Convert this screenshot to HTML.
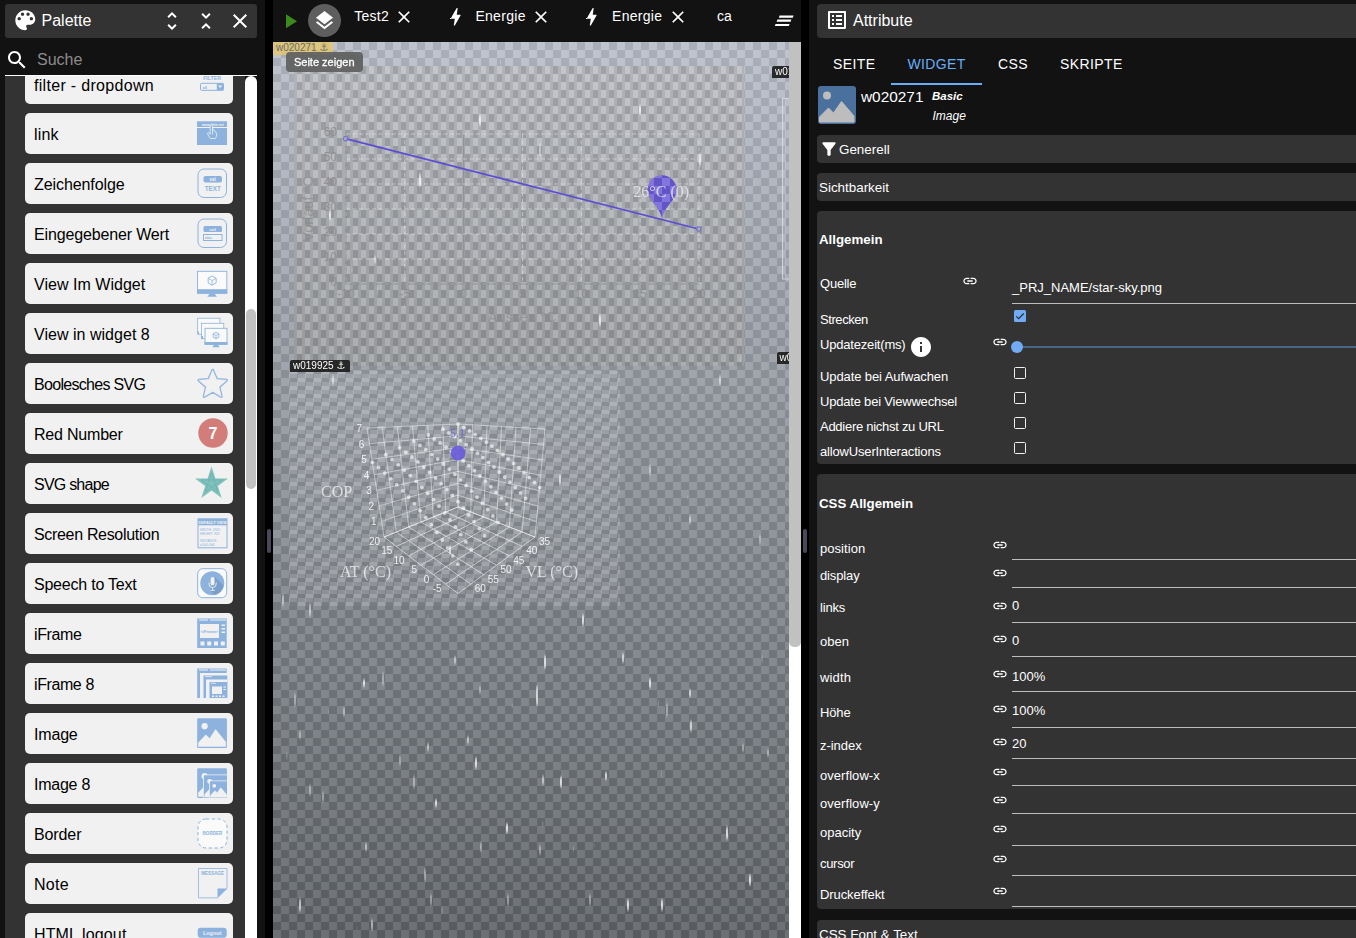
<!DOCTYPE html>
<html lang="de"><head><meta charset="utf-8"><title>vis editor</title>
<style>
*{box-sizing:border-box;margin:0;padding:0}
html,body{width:1356px;height:938px;overflow:hidden;background:#121212;font-family:"Liberation Sans","DejaVu Sans",sans-serif;color:#fff}
#root{position:relative;width:1356px;height:938px;overflow:hidden;background:#121212}
.abs{position:absolute}
svg{display:block}
/* left */
#lhead{left:5px;top:4px;width:252px;height:34px;background:#333;border-radius:3px}
#ptitle{left:41.5px;top:9px;font-size:16px;line-height:24px}
#search{left:37px;top:47.5px;font-size:16px;line-height:24px;color:#8c8c8c}
#sline{left:5px;top:74.9px;width:252px;height:1.2px;background:#fff}
#list{left:5px;top:76px;width:240px;height:862px;background:#333;overflow:hidden}
#ltrack{left:245px;top:76px;width:12px;height:862px;background:#fff;border-radius:6px 6px 0 0}
#lthumb{left:246px;top:309px;width:10px;height:180px;background:#c1c1c1;border-radius:5px}
.it{position:absolute;left:20.2px;width:207.5px;height:40.8px;background:#f1f1f1;border-radius:5px;color:#000;font-size:16px;line-height:40px;padding-left:8.8px;white-space:nowrap}
.it span{position:relative;top:2.7px}
.it svg{overflow:visible;position:absolute;right:5.8px;top:5.3px;width:30px;height:30px}
/* splitters */
.split{top:0;width:8px;height:938px;background:#000}
.grip{width:4px;height:24px;border-radius:2px;background:#484858}
/* center */
#canvas{left:273px;top:42px;width:516px;height:896px;overflow:hidden;background:#fff}
#ctrack{left:789px;top:42px;width:12px;height:896px;background:#fff}
#cthumb{left:789.3px;top:42px;width:11.4px;height:605px;background:#c1c1c1;border-radius:0 0 5px 5px}
.tab{font-size:14px;line-height:20px;top:6px;white-space:nowrap}
#chk{left:0;top:0;width:516px;height:896px;background:repeating-conic-gradient(#fff 0 25%,#ccc 0 50%) 0 0/16px 16px}
#w1{left:21px;top:24px;width:450px;height:300px;background:repeating-conic-gradient(rgba(239,222,191,.143) 0 25%,rgba(106,96,71,.143) 0 50%) 0 0/16px 16px}
#w2{left:16px;top:329px;width:331px;height:235px;background:repeating-conic-gradient(rgba(255,255,255,.17) 0 25%,rgba(150,150,150,.1) 0 50%) 1px 3px/16px 16px}
#sky{left:0;top:0;width:516px;height:896px;background:linear-gradient(to bottom,rgba(146,153,172,.58),rgba(72,80,91,.58) 50%,rgba(3,10,17,.58))}
.wl{font-size:10px;line-height:12px;padding-left:3px;white-space:nowrap;overflow:hidden}
.wd{background:rgba(30,30,30,.93);color:#fff;border-radius:2px 2px 0 0}
#tip{left:13px;top:10px;width:76.500px;height:20px;border-radius:4px;background:rgba(97,97,97,.94);font-size:11px;line-height:20px;-webkit-text-stroke:.3px #fff;text-align:center;white-space:nowrap}
/* right */
.blk{left:817px;width:545px;background:#333;border-radius:4px}
.lab{letter-spacing:-.2px;font-size:13px;line-height:16px;white-space:nowrap;left:820px}
.val{font-size:13px;line-height:16px;white-space:nowrap;left:1012px}
.sec{font-size:13.4px;line-height:16px;white-space:nowrap}
.secb{font-size:13.3px;line-height:16px;white-space:nowrap;font-weight:bold}
.ul{left:1012px;width:350px;height:1px;background:#bdbdbd}
.lk{width:16px;height:16px;fill:#fff}
.cb{left:1014px;width:12px;height:12px;border:1.5px solid #f0f0f0;border-radius:1.5px}
</style></head><body><div id="root">
<div id="lhead" class="abs"></div>
<svg class="abs" style="left:11.7px;top:7px;width:26.6px;height:26.6px;fill:#fff" viewBox="0 0 24 24"><path d="M12 3c-4.970 0-9 4.030-9 9s4.030 9 9 9c.830 0 1.500-.670 1.500-1.500 0-.390-.150-.740-.390-1.010-.230-.260-.380-.610-.380-.990 0-.830.670-1.500 1.500-1.500H16c2.760 0 5-2.240 5-5 0-4.420-4.030-8-9-8zm-5.500 9c-.830 0-1.500-.670-1.500-1.500S5.670 9 6.500 9 8 9.670 8 10.500 7.330 12 6.500 12zm3-4C8.670 8 8 7.330 8 6.500S8.670 5 9.500 5s1.500.670 1.500 1.500S10.330 8 9.500 8zm5 0c-.830 0-1.500-.670-1.500-1.500S13.670 5 14.500 5s1.500.670 1.500 1.500S15.330 8 14.500 8zm3 4c-.830 0-1.500-.670-1.500-1.500S16.670 9 17.500 9s1.500.670 1.500 1.500-.670 1.500-1.500 1.500z"/></svg><div class="abs" id="ptitle">Palette</div><svg class="abs" style="left:160px;top:9.3px;width:24px;height:24px;fill:#fff" viewBox="0 0 24 24"><path d="M12 5.830 15.170 9l1.410-1.410L12 3 7.410 7.590 8.830 9zm0 12.340L8.830 15l-1.410 1.410L12 21l4.590-4.590L15.170 15z"/></svg><svg class="abs" style="left:194px;top:9px;width:24px;height:24px;fill:#fff" viewBox="0 0 24 24"><path d="M7.410 18.590 8.830 20 12 16.830 15.170 20l1.410-1.410L12 14zm9.180-13.180L15.170 4 12 7.170 8.830 4 7.410 5.410 12 10z"/></svg><svg class="abs" style="left:228px;top:9.3px;width:24px;height:24px;fill:#fff" viewBox="0 0 24 24"><path d="M19 6.410 17.590 5 12 10.590 6.410 5 5 6.410 10.590 12 5 17.590 6.410 19 12 13.410 17.590 19 19 17.590 13.410 12z"/></svg>
<svg class="abs" style="left:5px;top:47.8px;width:24px;height:24px;fill:#fff" viewBox="0 0 24 24"><path d="M15.500 14h-.790l-.280-.270C15.410 12.590 16 11.110 16 9.500 16 5.910 13.090 3 9.500 3S3 5.910 3 9.500 5.910 16 9.500 16c1.610 0 3.090-.590 4.230-1.570l.270.280v.790l5 4.990L20.490 19zm-6 0C7.010 14 5 11.990 5 9.500S7.010 5 9.500 5 14 7.010 14 9.500 11.990 14 9.500 14"/></svg><div id="search" class="abs">Suche</div><div id="sline" class="abs"></div>
<div id="list" class="abs"><div class="it" style="top:-13.2px"><span style="letter-spacing:0.31px">filter - dropdown</span><svg viewBox="0 0 30 30"><text x="15.1" y="11.7" font-size="5.2" font-weight="bold" fill="#8cb2dd" text-anchor="middle">FILTER</text><rect x="3.5" y="15.3" width="23" height="7" rx="1" fill="#f1f1f1" stroke="#8cb2dd" stroke-width="1"/><rect x="19.8" y="15.3" width="6.7" height="7" fill="#8cb2dd"/><path d="M21.2 17.600h4l-2 2.400z" fill="#f1f1f1"/><text x="5.500" y="20.800" font-size="4" fill="#8cb2dd" font-weight="bold">all</text></svg></div><div class="it" style="top:36.8px"><span style="letter-spacing:0.195px">link</span><svg viewBox="0 0 30 30"><rect x="0" y="3.3" width="30" height="23.7" fill="#8cb2dd"/><rect x="0" y="9" width="30" height="1" fill="#f1f1f1"/><text x="15.8" y="7.6" font-size="3.6" fill="#f1f1f1" text-anchor="middle" font-weight="bold">www.link.net</text><path d="M15.6 9v7.5M15.6 12.5c1.2-.6 2.2-.4 2.4.8v1c1-.3 1.700.2 1.700 1.200 0 2-.4 3.600-1.400 5h-5c-.8-1.400-2-3-2.800-4.600-.4-1 .6-1.700 1.500-.8l1.200 1.300v-8.400c0-1.300 2.400-1.300 2.400 0z" fill="#8cb2dd" stroke="#f1f1f1" stroke-width=".8" stroke-linejoin="round"/></svg></div><div class="it" style="top:86.8px"><span style="letter-spacing:-0.077px">Zeichenfolge</span><svg viewBox="0 0 30 30"><rect x="1" y="1" width="28.5" height="28.5" rx="6" fill="none" stroke="#8cb2dd" stroke-width="1"/><rect x="6.5" y="8" width="18.500" height="6.500" rx="2" fill="#8cb2dd"/><text x="15.7" y="13" font-size="4.500" fill="#f1f1f1" text-anchor="middle" font-weight="bold">val</text><text x="15.7" y="23.3" font-size="6.3" fill="#8cb2dd" text-anchor="middle" font-weight="bold">TEXT</text></svg></div><div class="it" style="top:136.8px"><span style="letter-spacing:-0.146px">Eingegebener Wert</span><svg viewBox="0 0 30 30"><rect x="1" y="1" width="28.5" height="28.5" rx="6" fill="none" stroke="#8cb2dd" stroke-width="1"/><rect x="6.5" y="8" width="18.500" height="6" rx="1.500" fill="#8cb2dd"/><text x="15.7" y="12.700" font-size="4.300" fill="#f1f1f1" text-anchor="middle" font-weight="bold">ctrl</text><rect x="6.500" y="16.500" width="18.500" height="6" fill="#f1f1f1" stroke="#8cb2dd" stroke-width="1"/><text x="8" y="21.300" font-size="4" fill="#8cb2dd" font-weight="bold">abc</text></svg></div><div class="it" style="top:186.8px"><span style="letter-spacing:0.031px">View Im Widget</span><svg viewBox="0 0 30 30"><rect x="0.5" y="3.3" width="29.3" height="21.9" fill="#fafafa" stroke="#8cb2dd" stroke-width=".9"/><rect x="0.04999999999999999" y="21.2" width="30.2" height="4.45" fill="#8cb2dd"/><path d="M12.95 25.2h4.39l2.64 3.5h-9.67z" fill="#8cb2dd"/><path d="M15.15 7.95l3.98 2.30v4.60l-3.98 2.30l-3.98 -2.30v-4.60z" fill="none" stroke="#8cb2dd" stroke-width=".9" stroke-linejoin="round"/><path d="M15.15 17.15V12.55l3.98 -2.30M15.15 12.55l-3.98 -2.30" stroke="#8cb2dd" stroke-width=".8" fill="none"/></svg></div><div class="it" style="top:236.8px"><span style="letter-spacing:0.029px">View in widget 8</span><svg viewBox="0 0 30 30"><rect x="0.7" y="0.2" width="22.2" height="16" fill="#fafafa" stroke="#8cb2dd" stroke-width=".8"/><rect x="0.7" y="13.5" width="1.300" height="2.700" fill="#8cb2dd"/><rect x="4.400" y="5.300" width="22.400" height="15.400" fill="#fafafa" stroke="#8cb2dd" stroke-width=".8"/><rect x="4.400" y="18" width="1.600" height="2.700" fill="#8cb2dd"/><rect x="8" y="10.3" width="22" height="16" fill="#fafafa" stroke="#8cb2dd" stroke-width=".9"/><rect x="7.55" y="24.0" width="22.9" height="2.75" fill="#8cb2dd"/><path d="M17.35 26.3h3.30l1.98 3h-7.26z" fill="#8cb2dd"/><path d="M19.0 14.15l2.86 1.65v3.30l-2.86 1.65l-2.86 -1.65v-3.30z" fill="none" stroke="#8cb2dd" stroke-width=".9" stroke-linejoin="round"/><path d="M19.0 20.75V17.45l2.86 -1.65M19.0 17.45l-2.86 -1.65" stroke="#8cb2dd" stroke-width=".8" fill="none"/></svg></div><div class="it" style="top:286.8px"><span style="letter-spacing:-0.69px">Boolesches SVG</span><svg viewBox="0 0 30 30"><path d="M15.700 2.200l3.900 9.200 10 .850-7.600 6.550 2.300 9.800-8.600-5.200-8.600 5.200 2.300-9.800-7.600-6.550 10-.850z" fill="#8cb2dd" stroke="#8cb2dd" stroke-width="2.900" stroke-linejoin="round"/><path d="M15.700 2.200l3.900 9.200 10 .850-7.600 6.550 2.300 9.800-8.600-5.200-8.600 5.200 2.300-9.800-7.600-6.550 10-.850z" fill="#f1f1f1" stroke="#f1f1f1" stroke-width=".5" stroke-linejoin="round"/></svg></div><div class="it" style="top:336.8px"><span style="letter-spacing:-0.2px">Red Number</span><svg viewBox="0 0 30 30"><circle cx="16" cy="15" r="14.700" fill="#d27d79"/><text x="16" y="20.500" font-size="16" fill="#fff" text-anchor="middle" font-weight="bold">7</text></svg></div><div class="it" style="top:386.8px"><span style="letter-spacing:-0.77px">SVG shape</span><svg viewBox="0 0 30 30"><path d="M14.500 -1.500l3.900 12h12.600l-10.200 7.400 3.900 12-10.200-7.400-10.200 7.400 3.900-12-10.200-7.400h12.600z" fill="#7fc1bb"/><path d="M14.500 4.500l6.300 19.500-16.500-12h20.400l-16.500 12z" fill="none" stroke="#6cb0ae" stroke-width=".8"/></svg></div><div class="it" style="top:436.8px"><span style="letter-spacing:-0.321px">Screen Resolution</span><svg viewBox="0 0 30 30"><rect x="1" y="0.800" width="29" height="29" fill="#f1f1f1" stroke="#8cb2dd" stroke-width="1"/><rect x="1" y="0.800" width="29" height="6.500" fill="#8cb2dd"/><text x="15.500" y="6" font-size="3.800" fill="#f1f1f1" text-anchor="middle" font-weight="bold">DEFAULT VIEW</text><text x="3" y="12.800" font-size="3.300" fill="#8cb2dd">WIDTH: 1920</text><text x="3" y="17" font-size="3.300" fill="#8cb2dd">HEIGHT: 919</text><text x="3" y="23.800" font-size="3.300" fill="#8cb2dd">INSTANCE:</text><text x="3" y="27.800" font-size="3.300" fill="#8cb2dd">a1b2c3d4</text></svg></div><div class="it" style="top:486.8px"><span style="letter-spacing:-0.219px">Speech to Text</span><svg viewBox="0 0 30 30"><rect x="0.7" y="0.7" width="29" height="29" rx="5" fill="#fafafa" stroke="#8cb2dd" stroke-width="1"/><circle cx="15.300" cy="15.300" r="12" fill="#8cb2dd"/><path d="M18 9l8.300 8.300a11.500 11.500 0 0 1-8.800 9.600l-4.700-4.700z" fill="#7a9fc9"/><rect x="13.700" y="9" width="3.800" height="8.500" rx="1.900" fill="#f1f1f1"/><path d="M12 14.500v1.500a3.600 3.600 0 0 0 7.200 0v-1.500M15.600 19.600v2.400M13.300 22.300h4.600" stroke="#f1f1f1" stroke-width=".9" fill="none"/></svg></div><div class="it" style="top:536.8px"><span style="letter-spacing:-0.398px">iFrame</span><svg viewBox="0 0 30 30"><rect x="0.2" y="0.500" width="29.500" height="29.500" fill="#8cb2dd"/><rect x="2" y="1.500" width="9" height="1" fill="#f1f1f1"/><rect x="13" y="1.500" width="16" height="1" fill="#f1f1f1"/><rect x="3" y="6" width="19" height="14" fill="#f1f1f1"/><text x="12.500" y="14.800" font-size="4" fill="#8cb2dd" text-anchor="middle" font-weight="bold">&lt;iFrame&gt;</text><rect x="24.500" y="6.500" width="3.500" height="1.500" fill="#f1f1f1"/><rect x="24.500" y="10" width="3.500" height="1.500" fill="#f1f1f1"/><rect x="24.500" y="13.500" width="3.500" height="1.500" fill="#f1f1f1"/><rect x="3.500" y="23.500" width="4" height="4" fill="#f1f1f1"/><rect x="10.200" y="23.500" width="4" height="4" fill="#f1f1f1"/><rect x="17" y="23.500" width="4" height="4" fill="#f1f1f1"/><rect x="23.800" y="23.500" width="4" height="4" fill="#f1f1f1"/></svg></div><div class="it" style="top:586.8px"><span style="letter-spacing:-0.405px">iFrame 8</span><svg viewBox="0 0 30 30"><rect x="0.2" y="0.500" width="29.500" height="29.500" fill="#8cb2dd"/><rect x="2" y="1.500" width="9" height="1" fill="#f1f1f1"/><rect x="13" y="1.500" width="16" height="1" fill="#f1f1f1"/><rect x="3" y="5" width="27.300" height="25" fill="#f1f1f1"/><rect x="6.500" y="7.500" width="23.800" height="22.500" fill="#8cb2dd"/><rect x="8" y="8.300" width="7" height=".8" fill="#f1f1f1"/><rect x="9" y="11.500" width="21.300" height="18.500" fill="#f1f1f1"/><rect x="12.500" y="14" width="17.800" height="16" fill="#8cb2dd"/><rect x="14" y="14.800" width="5" height=".8" fill="#f1f1f1"/><rect x="15" y="18.500" width="10" height="7.500" fill="#f1f1f1"/><rect x="26.500" y="18.500" width="2.500" height="1" fill="#f1f1f1"/><rect x="26.500" y="21" width="2.500" height="1" fill="#f1f1f1"/><rect x="15" y="27.500" width="2" height="1.500" fill="#f1f1f1"/><rect x="18.500" y="27.500" width="2" height="1.500" fill="#f1f1f1"/><rect x="22" y="27.500" width="2" height="1.500" fill="#f1f1f1"/><rect x="25.500" y="27.500" width="2" height="1.500" fill="#f1f1f1"/></svg></div><div class="it" style="top:636.8px"><span style="letter-spacing:-0.174px">Image</span><svg viewBox="0 0 30 30"><rect x="0.2" y="0.2" width="29.7" height="29.7" rx="1.2" fill="#8cb2dd"/><circle cx="7.62" cy="8.22" r="3.12" fill="#f1f1f1"/><path d="M1.39 28.41v-3.56l7.42 -8.02 3.86 3.56 5.94 -8.91 10.10 12.47v4.46z" fill="#f1f1f1" stroke="#f1f1f1" stroke-width=".5" stroke-linejoin="round"/></svg></div><div class="it" style="top:686.8px"><span style="letter-spacing:-0.245px">Image 8</span><svg viewBox="0 0 30 30" style="overflow:hidden"><rect x="0.2" y="0.2" width="29.7" height="29.7" rx="1.2" fill="#8cb2dd"/><circle cx="7.62" cy="8.22" r="3.12" fill="#f1f1f1"/><path d="M1.39 28.41v-3.56l7.42 -8.02 3.86 3.56 5.94 -8.91 10.10 12.47v4.46z" fill="#f1f1f1" stroke="#f1f1f1" stroke-width=".5" stroke-linejoin="round"/><rect x="6" y="6.500" width="24.500" height="23.700" rx="1.200" fill="#f1f1f1"/><rect x="6.8" y="7.3" width="23.7" height="22.9" rx="1.2" fill="#8cb2dd"/><circle cx="12.72" cy="13.48" r="2.49" fill="#f1f1f1"/><path d="M7.75 29.05v-2.75l5.92 -6.18 3.08 2.75 4.74 -6.87 8.06 9.62v3.43z" fill="#f1f1f1" stroke="#f1f1f1" stroke-width=".5" stroke-linejoin="round"/><rect x="12" y="12.500" width="18.500" height="17.700" rx="1.200" fill="#f1f1f1"/><rect x="12.8" y="13.3" width="17.7" height="16.9" rx="1.2" fill="#8cb2dd"/><circle cx="17.23" cy="17.86" r="1.86" fill="#f1f1f1"/><path d="M13.51 29.35v-2.03l4.42 -4.56 2.30 2.03 3.54 -5.07 6.02 7.10v2.53z" fill="#f1f1f1" stroke="#f1f1f1" stroke-width=".5" stroke-linejoin="round"/></svg></div><div class="it" style="top:736.8px"><span style="letter-spacing:-0.104px">Border</span><svg viewBox="0 0 30 30"><rect x="1" y="1" width="29" height="29" rx="8" fill="#fafafa" stroke="#8cb2dd" stroke-width="1" stroke-dasharray="3.300 2.500"/><text x="15.500" y="17.300" font-size="4.600" fill="#8cb2dd" text-anchor="middle" font-weight="bold">BORDER</text></svg></div><div class="it" style="top:786.8px"><span style="letter-spacing:0.249px">Note</span><svg viewBox="0 0 30 30"><path d="M1.500 .500h28.500v20l-9.500 9.300h-19z" fill="#f1f1f1" stroke="#8cb2dd" stroke-width=".8"/><path d="M30 20.500l-9.500 9.300v-9.300z" fill="#8cb2dd"/><text x="15.700" y="7" font-size="4.600" fill="#8cb2dd" text-anchor="middle" font-weight="bold">MESSAGE</text></svg></div><div class="it" style="top:836.8px"><span style="letter-spacing:0.136px">HTML logout</span><svg viewBox="0 0 30 30"><rect x="0.7" y="9.800" width="29" height="10" rx="3" fill="#8cb2dd"/><text x="15.200" y="17.100" font-size="5.500" fill="#f1f1f1" text-anchor="middle" font-weight="bold">Logout</text></svg></div></div><div id="ltrack" class="abs"></div><div id="lthumb" class="abs"></div>
<div class="abs split" style="left:265px"></div><div class="abs grip" style="left:267px;top:529px"></div>
<div class="abs split" style="left:801px"></div><div class="abs grip" style="left:803.2px;top:529px"></div>
<svg class="abs" style="left:286px;top:13.5px;width:12px;height:15px" viewBox="0 0 12 15"><path d="M0 0.300L11 7.300 0 14.300z" fill="#3a8a1e"/></svg><div class="abs" style="left:308px;top:4px;width:33px;height:33px;border-radius:50%;background:#5e5e5e"></div><svg class="abs" style="left:312.7px;top:9px;width:23px;height:23px;fill:#fff" viewBox="0 0 24 24"><path d="m11.990 18.540-7.370-5.730L3 14.070l9 7 9-7-1.630-1.270zM12 16l7.360-5.730L21 9l-9-7-9 7 1.630 1.270z"/></svg><div class="abs tab" style="left:354.3px;letter-spacing:.25px">Test2</div><svg class="abs" style="left:394.2px;top:7px;width:20px;height:20px;fill:#fff" viewBox="0 0 24 24"><path d="M19 6.410 17.590 5 12 10.590 6.410 5 5 6.410 10.590 12 5 17.590 6.410 19 12 13.410 17.590 19 19 17.590 13.410 12z"/></svg><svg class="abs" style="left:443.5px;top:5px;width:23.5px;height:23.5px;fill:#fff" viewBox="0 0 24 24"><path d="M11 21h-1l1-7H7.500c-.580 0-.570-.320-.380-.660.190-.340.050-.080.070-.120C8.480 10.940 10.420 7.540 13 3h1l-1 7h3.500c.490 0 .560.330.470.510l-.070.150C12.960 17.550 11 21 11 21z"/></svg><div class="abs tab" style="left:475.4px;letter-spacing:.3px">Energie</div><svg class="abs" style="left:530.7px;top:7px;width:20px;height:20px;fill:#fff" viewBox="0 0 24 24"><path d="M19 6.410 17.590 5 12 10.590 6.410 5 5 6.410 10.590 12 5 17.590 6.410 19 12 13.410 17.590 19 19 17.590 13.410 12z"/></svg><svg class="abs" style="left:580.4px;top:5px;width:23.5px;height:23.5px;fill:#fff" viewBox="0 0 24 24"><path d="M11 21h-1l1-7H7.500c-.580 0-.570-.320-.380-.660.190-.340.050-.080.070-.120C8.480 10.940 10.420 7.540 13 3h1l-1 7h3.500c.490 0 .560.330.470.510l-.070.150C12.960 17.550 11 21 11 21z"/></svg><div class="abs tab" style="left:612px;letter-spacing:.3px">Energie</div><svg class="abs" style="left:668.2px;top:7px;width:20px;height:20px;fill:#fff" viewBox="0 0 24 24"><path d="M19 6.410 17.590 5 12 10.590 6.410 5 5 6.410 10.590 12 5 17.590 6.410 19 12 13.410 17.590 19 19 17.590 13.410 12z"/></svg><div class="abs tab" style="left:717px">ca</div><svg class="abs" style="left:774px;top:15px;width:21px;height:12px" viewBox="0 0 21 12"><path d="M5.600 .600h14l-.800 2.100h-14zM3.400 4.600h14l-.800 2.100h-14zM1.600 8.900h14l-.800 2.200h-14z" fill="#fff"/></svg>
<div id="canvas" class="abs"><div class="abs" id="chk"></div><div class="abs" id="sky"></div><div class="abs" id="w1"></div><div class="abs" id="w2"></div><svg class="abs" style="left:0;top:0;width:516px;height:896px" viewBox="0 0 516 896" font-family="Liberation Sans, sans-serif"><path d="M73.0 92V242" stroke="#ececec" stroke-width="1" stroke-dasharray="4 2.500" opacity=".5"/><path d="M131.8 92V242" stroke="#ececec" stroke-width="1" stroke-dasharray="4 2.500" opacity=".5"/><path d="M190.7 92V242" stroke="#8c8c8c" stroke-width="1.3" opacity=".75"/><path d="M249.5 92V242" stroke="#ececec" stroke-width="1" stroke-dasharray="4 2.500" opacity=".5"/><path d="M308.3 92V242" stroke="#ececec" stroke-width="1" stroke-dasharray="4 2.500" opacity=".5"/><path d="M367.1 92V242" stroke="#ececec" stroke-width="1" stroke-dasharray="4 2.500" opacity=".5"/><path d="M426.0 92V242" stroke="#ececec" stroke-width="1" stroke-dasharray="4 2.500" opacity=".5"/><path d="M73.0 92H426.0" stroke="#ececec" stroke-width="1" stroke-dasharray="4 2.500" opacity=".5"/><path d="M73.0 117H426.0" stroke="#ececec" stroke-width="1" stroke-dasharray="4 2.500" opacity=".5"/><path d="M73.0 142H426.0" stroke="#ececec" stroke-width="1" stroke-dasharray="4 2.500" opacity=".5"/><path d="M73.0 167H426.0" stroke="#ececec" stroke-width="1" stroke-dasharray="4 2.500" opacity=".5"/><path d="M73.0 192H426.0" stroke="#ececec" stroke-width="1" stroke-dasharray="4 2.500" opacity=".5"/><path d="M73.0 217H426.0" stroke="#ececec" stroke-width="1" stroke-dasharray="4 2.500" opacity=".5"/><path d="M73.0 242H426.0" stroke="#ececec" stroke-width="1" stroke-dasharray="4 2.500" opacity=".5"/><path d="M73.0 92V242H426.0" stroke="#8c8c8c" stroke-width="1.3" fill="none" opacity=".7"/><text x="64" y="94" font-size="12" fill="#8b8b8b" opacity=".8" text-anchor="end">60</text><text x="64" y="119" font-size="12" fill="#8b8b8b" opacity=".8" text-anchor="end">50</text><text x="64" y="144" font-size="12" fill="#8b8b8b" opacity=".8" text-anchor="end">40</text><text x="64" y="169" font-size="12" fill="#8b8b8b" opacity=".8" text-anchor="end">30</text><text x="64" y="194" font-size="12" fill="#8b8b8b" opacity=".8" text-anchor="end">20</text><text x="64" y="219" font-size="12" fill="#8b8b8b" opacity=".8" text-anchor="end">10</text><text x="64" y="244" font-size="12" fill="#8b8b8b" opacity=".8" text-anchor="end">0</text><text x="73.0" y="256" font-size="12" fill="#8b8b8b" opacity=".8" text-anchor="middle">-10</text><text x="131.8" y="256" font-size="12" fill="#8b8b8b" opacity=".8" text-anchor="middle">-5</text><text x="190.7" y="256" font-size="12" fill="#8b8b8b" opacity=".8" text-anchor="middle">0</text><text x="249.5" y="256" font-size="12" fill="#8b8b8b" opacity=".8" text-anchor="middle">5</text><text x="308.3" y="256" font-size="12" fill="#8b8b8b" opacity=".8" text-anchor="middle">10</text><text x="367.1" y="256" font-size="12" fill="#8b8b8b" opacity=".8" text-anchor="middle">15</text><text x="426.0" y="256" font-size="12" fill="#8b8b8b" opacity=".8" text-anchor="middle">20</text><text x="249" y="280" font-size="14.500" fill="#8b8b8b" opacity=".7" text-anchor="middle">Aussen °C</text><text transform="translate(39.5 167) rotate(-90)" font-size="14.500" fill="#8b8b8b" opacity=".7" text-anchor="middle">Vorlauf °C</text><path d="M516 56.5H509.6V237H516" stroke="#e4e4e8" stroke-width="1.200" fill="none" opacity=".75"/><path d="M512.2 58V235.5" stroke="#e4e4e8" stroke-width=".8" fill="none" opacity=".5"/></svg><svg class="abs" style="left:0;top:0;width:516px;height:896px" viewBox="0 0 516 896" font-family="Liberation Sans, sans-serif"><defs><filter id="bl" x="-200%" y="-50%" width="500%" height="200%"><feGaussianBlur stdDeviation=".55 .9"/></filter></defs><g filter="url(#bl)" opacity=".8"><ellipse cx="10" cy="558" rx="1" ry="6" fill="#fff" opacity="0.65"/><ellipse cx="22" cy="658" rx="1" ry="7" fill="#fff" opacity="0.5"/><ellipse cx="27" cy="693" rx="1" ry="4" fill="#fff" opacity="0.5"/><ellipse cx="37" cy="748" rx="1" ry="6" fill="#fff" opacity="0.5"/><ellipse cx="50" cy="755" rx="1" ry="5" fill="#fff" opacity="0.5"/><ellipse cx="91" cy="641" rx="1" ry="4" fill="#fff" opacity="0.9500000000000001"/><ellipse cx="110" cy="637" rx="1" ry="7" fill="#fff" opacity="0.5"/><ellipse cx="127" cy="718" rx="1" ry="5" fill="#fff" opacity="0.5"/><ellipse cx="141" cy="740" rx="1" ry="7" fill="#fff" opacity="0.5"/><ellipse cx="155" cy="705" rx="1" ry="4" fill="#fff" opacity="0.65"/><ellipse cx="163" cy="761" rx="1" ry="4" fill="#fff" opacity="0.9500000000000001"/><ellipse cx="182" cy="618" rx="1" ry="4" fill="#fff" opacity="0.65"/><ellipse cx="195" cy="698" rx="1" ry="4" fill="#fff" opacity="0.65"/><ellipse cx="203" cy="721" rx="1" ry="6" fill="#fff" opacity="0.9500000000000001"/><ellipse cx="208" cy="805" rx="1" ry="5" fill="#fff" opacity="0.5"/><ellipse cx="99" cy="883" rx="1" ry="6" fill="#fff" opacity="0.65"/><ellipse cx="93" cy="805" rx="1" ry="4" fill="#fff" opacity="0.65"/><ellipse cx="158" cy="858" rx="1" ry="6" fill="#fff" opacity="0.5"/><ellipse cx="207" cy="648" rx="1" ry="4" fill="#fff" opacity="0.5"/><ellipse cx="234" cy="786" rx="1" ry="5" fill="#fff" opacity="0.9500000000000001"/><ellipse cx="264" cy="650" rx="1" ry="7" fill="#fff" opacity="0.8"/><ellipse cx="272" cy="620" rx="1" ry="7" fill="#fff" opacity="0.9500000000000001"/><ellipse cx="264" cy="658" rx="1" ry="6" fill="#fff" opacity="0.8"/><ellipse cx="270" cy="738" rx="1" ry="5" fill="#fff" opacity="0.65"/><ellipse cx="267" cy="808" rx="1" ry="5" fill="#fff" opacity="0.5"/><ellipse cx="288" cy="740" rx="1" ry="6" fill="#fff" opacity="0.9500000000000001"/><ellipse cx="310" cy="578" rx="1" ry="6" fill="#fff" opacity="0.9500000000000001"/><ellipse cx="317" cy="858" rx="1" ry="6" fill="#fff" opacity="0.5"/><ellipse cx="333" cy="734" rx="1" ry="4" fill="#fff" opacity="0.9500000000000001"/><ellipse cx="350" cy="616" rx="1" ry="5" fill="#fff" opacity="0.8"/><ellipse cx="377" cy="641" rx="1" ry="5" fill="#fff" opacity="0.9500000000000001"/><ellipse cx="394" cy="668" rx="1" ry="7" fill="#fff" opacity="0.5"/><ellipse cx="417" cy="651" rx="1" ry="4" fill="#fff" opacity="0.8"/><ellipse cx="418" cy="684" rx="1" ry="6" fill="#fff" opacity="0.8"/><ellipse cx="454" cy="791" rx="1" ry="7" fill="#fff" opacity="0.9500000000000001"/><ellipse cx="470" cy="706" rx="1" ry="4" fill="#fff" opacity="0.5"/><ellipse cx="477" cy="838" rx="1" ry="6" fill="#fff" opacity="0.9500000000000001"/><ellipse cx="495" cy="711" rx="1" ry="4" fill="#fff" opacity="0.5"/><ellipse cx="355" cy="863" rx="1" ry="6" fill="#fff" opacity="0.9500000000000001"/><ellipse cx="389" cy="863" rx="1" ry="6" fill="#fff" opacity="0.9500000000000001"/><ellipse cx="235" cy="858" rx="1" ry="6" fill="#fff" opacity="0.5"/><ellipse cx="27" cy="863" rx="1" ry="7" fill="#fff" opacity="0.8"/><ellipse cx="71" cy="670" rx="1" ry="5" fill="#fff" opacity="0.5"/><ellipse cx="152" cy="833" rx="1" ry="7" fill="#fff" opacity="0.5"/><ellipse cx="177" cy="508" rx="1" ry="5" fill="#fff" opacity="0.8"/><ellipse cx="60" cy="338" rx="1" ry="5" fill="#fff" opacity="0.65"/><ellipse cx="147" cy="138" rx="1" ry="7" fill="#fff" opacity="0.9500000000000001"/><ellipse cx="267" cy="108" rx="1" ry="7" fill="#fff" opacity="0.5"/><ellipse cx="367" cy="68" rx="1" ry="5" fill="#fff" opacity="0.9500000000000001"/><ellipse cx="427" cy="118" rx="1" ry="7" fill="#fff" opacity="0.8"/><ellipse cx="57" cy="173" rx="1" ry="5" fill="#fff" opacity="0.9500000000000001"/><ellipse cx="207" cy="78" rx="1" ry="6" fill="#fff" opacity="0.9500000000000001"/><ellipse cx="327" cy="278" rx="1" ry="6" fill="#fff" opacity="0.9500000000000001"/><ellipse cx="447" cy="338" rx="1" ry="5" fill="#fff" opacity="0.65"/><ellipse cx="417" cy="478" rx="1" ry="4" fill="#fff" opacity="0.65"/><ellipse cx="377" cy="428" rx="1" ry="5" fill="#fff" opacity="0.65"/><ellipse cx="487" cy="498" rx="1" ry="5" fill="#fff" opacity="0.5"/><ellipse cx="37" cy="568" rx="1" ry="7" fill="#fff" opacity="0.65"/><ellipse cx="287" cy="438" rx="1" ry="6" fill="#fff" opacity="0.8"/><ellipse cx="102" cy="218" rx="1" ry="4" fill="#fff" opacity="0.65"/><ellipse cx="216.7" cy="331.9" rx=".6" ry="4" fill="#fff" opacity="0.2"/><ellipse cx="489.1" cy="617.2" rx=".6" ry="4" fill="#fff" opacity="0.3"/><ellipse cx="337.0" cy="660.9" rx=".6" ry="3" fill="#fff" opacity="0.3"/><ellipse cx="409.9" cy="352.4" rx=".6" ry="3" fill="#fff" opacity="0.2"/><ellipse cx="55.8" cy="567.2" rx=".6" ry="2" fill="#fff" opacity="0.15"/><ellipse cx="37.3" cy="189.4" rx=".6" ry="2" fill="#fff" opacity="0.15"/><ellipse cx="176.4" cy="50.7" rx=".6" ry="2" fill="#fff" opacity="0.3"/><ellipse cx="80.1" cy="94.1" rx=".6" ry="3" fill="#fff" opacity="0.3"/><ellipse cx="16.0" cy="780.4" rx=".6" ry="4" fill="#fff" opacity="0.2"/><ellipse cx="78.8" cy="228.0" rx=".6" ry="3" fill="#fff" opacity="0.3"/><ellipse cx="188.7" cy="113.1" rx=".6" ry="3" fill="#fff" opacity="0.2"/><ellipse cx="248.0" cy="280.9" rx=".6" ry="2" fill="#fff" opacity="0.15"/><ellipse cx="385.3" cy="661.4" rx=".6" ry="3" fill="#fff" opacity="0.3"/><ellipse cx="85.3" cy="24.5" rx=".6" ry="4" fill="#fff" opacity="0.2"/><ellipse cx="77.8" cy="486.3" rx=".6" ry="2" fill="#fff" opacity="0.3"/><ellipse cx="155.0" cy="574.9" rx=".6" ry="2" fill="#fff" opacity="0.3"/><ellipse cx="434.2" cy="464.3" rx=".6" ry="2" fill="#fff" opacity="0.2"/><ellipse cx="396.7" cy="476.9" rx=".6" ry="4" fill="#fff" opacity="0.2"/><ellipse cx="327.6" cy="548.5" rx=".6" ry="2" fill="#fff" opacity="0.15"/><ellipse cx="420.3" cy="661.0" rx=".6" ry="2" fill="#fff" opacity="0.15"/><ellipse cx="267.0" cy="319.7" rx=".6" ry="2" fill="#fff" opacity="0.15"/><ellipse cx="406.0" cy="423.3" rx=".6" ry="2" fill="#fff" opacity="0.3"/><ellipse cx="311.6" cy="309.7" rx=".6" ry="4" fill="#fff" opacity="0.2"/><ellipse cx="490.1" cy="327.8" rx=".6" ry="2" fill="#fff" opacity="0.15"/><ellipse cx="118.7" cy="178.7" rx=".6" ry="2" fill="#fff" opacity="0.2"/><ellipse cx="321.3" cy="803.5" rx=".6" ry="2" fill="#fff" opacity="0.2"/><ellipse cx="466.7" cy="309.5" rx=".6" ry="4" fill="#fff" opacity="0.15"/><ellipse cx="428.7" cy="110.5" rx=".6" ry="3" fill="#fff" opacity="0.3"/><ellipse cx="385.6" cy="428.5" rx=".6" ry="2" fill="#fff" opacity="0.2"/><ellipse cx="405.5" cy="299.3" rx=".6" ry="4" fill="#fff" opacity="0.2"/><ellipse cx="239.2" cy="664.1" rx=".6" ry="2" fill="#fff" opacity="0.3"/><ellipse cx="84.0" cy="885.9" rx=".6" ry="2" fill="#fff" opacity="0.15"/><ellipse cx="304.3" cy="417.2" rx=".6" ry="4" fill="#fff" opacity="0.15"/><ellipse cx="314.9" cy="533.1" rx=".6" ry="3" fill="#fff" opacity="0.3"/><ellipse cx="481.1" cy="142.5" rx=".6" ry="4" fill="#fff" opacity="0.15"/><ellipse cx="13.9" cy="713.8" rx=".6" ry="4" fill="#fff" opacity="0.3"/><ellipse cx="55.4" cy="669.6" rx=".6" ry="2" fill="#fff" opacity="0.2"/><ellipse cx="506.1" cy="177.0" rx=".6" ry="2" fill="#fff" opacity="0.15"/><ellipse cx="131.4" cy="264.2" rx=".6" ry="2" fill="#fff" opacity="0.3"/><ellipse cx="169.3" cy="487.4" rx=".6" ry="2" fill="#fff" opacity="0.15"/><ellipse cx="467.1" cy="318.2" rx=".6" ry="3" fill="#fff" opacity="0.3"/><ellipse cx="300.5" cy="807.0" rx=".6" ry="3" fill="#fff" opacity="0.3"/><ellipse cx="69.7" cy="138.8" rx=".6" ry="4" fill="#fff" opacity="0.15"/><ellipse cx="448.1" cy="693.5" rx=".6" ry="4" fill="#fff" opacity="0.15"/><ellipse cx="398.8" cy="137.0" rx=".6" ry="2" fill="#fff" opacity="0.2"/><ellipse cx="318.7" cy="110.9" rx=".6" ry="2" fill="#fff" opacity="0.2"/><ellipse cx="351.0" cy="475.3" rx=".6" ry="3" fill="#fff" opacity="0.15"/><ellipse cx="453.4" cy="54.5" rx=".6" ry="2" fill="#fff" opacity="0.2"/><ellipse cx="24.5" cy="90.8" rx=".6" ry="3" fill="#fff" opacity="0.3"/><ellipse cx="17.2" cy="797.9" rx=".6" ry="2" fill="#fff" opacity="0.2"/><ellipse cx="169.1" cy="868.3" rx=".6" ry="4" fill="#fff" opacity="0.3"/><ellipse cx="104.7" cy="250.1" rx=".6" ry="4" fill="#fff" opacity="0.3"/><ellipse cx="414.8" cy="454.9" rx=".6" ry="2" fill="#fff" opacity="0.3"/><ellipse cx="269.8" cy="781.9" rx=".6" ry="3" fill="#fff" opacity="0.3"/><ellipse cx="458.3" cy="183.9" rx=".6" ry="3" fill="#fff" opacity="0.15"/><ellipse cx="215.5" cy="352.4" rx=".6" ry="3" fill="#fff" opacity="0.15"/><ellipse cx="345.3" cy="384.4" rx=".6" ry="2" fill="#fff" opacity="0.3"/><ellipse cx="157.4" cy="112.6" rx=".6" ry="2" fill="#fff" opacity="0.3"/><ellipse cx="331.2" cy="329.2" rx=".6" ry="3" fill="#fff" opacity="0.15"/><ellipse cx="496.4" cy="199.0" rx=".6" ry="2" fill="#fff" opacity="0.2"/><ellipse cx="454.3" cy="148.6" rx=".6" ry="4" fill="#fff" opacity="0.15"/><ellipse cx="85.3" cy="387.2" rx=".6" ry="4" fill="#fff" opacity="0.2"/><ellipse cx="175.9" cy="177.8" rx=".6" ry="3" fill="#fff" opacity="0.15"/><ellipse cx="371.3" cy="21.3" rx=".6" ry="4" fill="#fff" opacity="0.2"/><ellipse cx="227.6" cy="20.1" rx=".6" ry="3" fill="#fff" opacity="0.3"/><ellipse cx="321.2" cy="458.9" rx=".6" ry="2" fill="#fff" opacity="0.15"/><ellipse cx="505.4" cy="704.1" rx=".6" ry="2" fill="#fff" opacity="0.15"/><ellipse cx="138.4" cy="39.2" rx=".6" ry="2" fill="#fff" opacity="0.2"/><ellipse cx="388.4" cy="732.0" rx=".6" ry="4" fill="#fff" opacity="0.2"/><ellipse cx="210.0" cy="480.5" rx=".6" ry="4" fill="#fff" opacity="0.3"/></g><path d="M185.0 465.0L111.0 495.0" stroke="#fff" stroke-width="0.9" opacity="0.6"/><path d="M185.0 465.0L262.0 495.0" stroke="#fff" stroke-width="0.9" opacity="0.6"/><path d="M185.0 465.0L185.0 382.0" stroke="#fff" stroke-width="0.9" opacity="0.5"/><path d="M185.0 465.0L185.0 382.0" stroke="#fff" stroke-width="0.9" opacity="0.5"/><path d="M197.8 470.0L123.3 504.4" stroke="#fff" stroke-width="0.9" opacity="0.6"/><path d="M172.7 470.0L249.2 504.4" stroke="#fff" stroke-width="0.9" opacity="0.6"/><path d="M172.7 470.0L169.8 382.7" stroke="#fff" stroke-width="0.9" opacity="0.5"/><path d="M197.8 470.0L199.5 382.8" stroke="#fff" stroke-width="0.9" opacity="0.5"/><path d="M210.7 475.0L135.7 513.8" stroke="#fff" stroke-width="0.9" opacity="0.6"/><path d="M160.3 475.0L236.3 513.8" stroke="#fff" stroke-width="0.9" opacity="0.6"/><path d="M160.3 475.0L154.7 383.3" stroke="#fff" stroke-width="0.9" opacity="0.5"/><path d="M210.7 475.0L214.0 383.7" stroke="#fff" stroke-width="0.9" opacity="0.5"/><path d="M223.5 480.0L148.0 523.2" stroke="#fff" stroke-width="0.9" opacity="0.6"/><path d="M148.0 480.0L223.5 523.2" stroke="#fff" stroke-width="0.9" opacity="0.6"/><path d="M148.0 480.0L139.5 384.0" stroke="#fff" stroke-width="0.9" opacity="0.5"/><path d="M223.5 480.0L228.5 384.5" stroke="#fff" stroke-width="0.9" opacity="0.5"/><path d="M236.3 485.0L160.3 532.7" stroke="#fff" stroke-width="0.9" opacity="0.6"/><path d="M135.7 485.0L210.7 532.7" stroke="#fff" stroke-width="0.9" opacity="0.6"/><path d="M135.7 485.0L124.3 384.7" stroke="#fff" stroke-width="0.9" opacity="0.5"/><path d="M236.3 485.0L243.0 385.3" stroke="#fff" stroke-width="0.9" opacity="0.5"/><path d="M249.2 490.0L172.7 542.1" stroke="#fff" stroke-width="0.9" opacity="0.6"/><path d="M123.3 490.0L197.8 542.1" stroke="#fff" stroke-width="0.9" opacity="0.6"/><path d="M123.3 490.0L109.2 385.3" stroke="#fff" stroke-width="0.9" opacity="0.5"/><path d="M249.2 490.0L257.5 386.2" stroke="#fff" stroke-width="0.9" opacity="0.5"/><path d="M262.0 495.0L185.0 551.5" stroke="#fff" stroke-width="0.9" opacity="0.6"/><path d="M111.0 495.0L185.0 551.5" stroke="#fff" stroke-width="0.9" opacity="0.6"/><path d="M111.0 495.0L94.0 386.0" stroke="#fff" stroke-width="0.9" opacity="0.5"/><path d="M262.0 495.0L272.0 387.0" stroke="#fff" stroke-width="0.9" opacity="0.5"/><path d="M185.0 465.0L111.0 495.0" stroke="#fff" stroke-width="0.9" opacity="0.5"/><path d="M185.0 465.0L262.0 495.0" stroke="#fff" stroke-width="0.9" opacity="0.5"/><path d="M185.0 453.1L108.6 479.4" stroke="#fff" stroke-width="0.9" opacity="0.5"/><path d="M185.0 453.1L263.4 479.6" stroke="#fff" stroke-width="0.9" opacity="0.5"/><path d="M185.0 441.3L106.1 463.9" stroke="#fff" stroke-width="0.9" opacity="0.5"/><path d="M185.0 441.3L264.9 464.1" stroke="#fff" stroke-width="0.9" opacity="0.5"/><path d="M185.0 429.4L103.7 448.3" stroke="#fff" stroke-width="0.9" opacity="0.5"/><path d="M185.0 429.4L266.3 448.7" stroke="#fff" stroke-width="0.9" opacity="0.5"/><path d="M185.0 417.6L101.3 432.7" stroke="#fff" stroke-width="0.9" opacity="0.5"/><path d="M185.0 417.6L267.7 433.3" stroke="#fff" stroke-width="0.9" opacity="0.5"/><path d="M185.0 405.7L98.9 417.1" stroke="#fff" stroke-width="0.9" opacity="0.5"/><path d="M185.0 405.7L269.1 417.9" stroke="#fff" stroke-width="0.9" opacity="0.5"/><path d="M185.0 393.9L96.4 401.6" stroke="#fff" stroke-width="0.9" opacity="0.5"/><path d="M185.0 393.9L270.6 402.4" stroke="#fff" stroke-width="0.9" opacity="0.5"/><path d="M185.0 382.0L94.0 386.0" stroke="#fff" stroke-width="0.9" opacity="0.5"/><path d="M185.0 382.0L272.0 387.0" stroke="#fff" stroke-width="0.9" opacity="0.5"/><circle cx="185.0" cy="382.0" r="1.900" fill="#fff" opacity=".62"/><circle cx="190.8" cy="385.4" r="1.900" fill="#fff" opacity=".62"/><circle cx="196.5" cy="388.9" r="1.900" fill="#fff" opacity=".62"/><circle cx="202.2" cy="392.6" r="1.900" fill="#fff" opacity=".62"/><circle cx="207.8" cy="396.3" r="1.900" fill="#fff" opacity=".62"/><circle cx="213.4" cy="400.2" r="1.900" fill="#fff" opacity=".62"/><circle cx="218.9" cy="404.2" r="1.900" fill="#fff" opacity=".62"/><circle cx="224.4" cy="408.3" r="1.900" fill="#fff" opacity=".62"/><circle cx="229.9" cy="412.6" r="1.900" fill="#fff" opacity=".62"/><circle cx="235.2" cy="416.9" r="1.900" fill="#fff" opacity=".62"/><circle cx="240.6" cy="421.4" r="1.900" fill="#fff" opacity=".62"/><circle cx="245.9" cy="426.0" r="1.900" fill="#fff" opacity=".62"/><circle cx="251.1" cy="430.7" r="1.900" fill="#fff" opacity=".62"/><circle cx="256.3" cy="435.6" r="1.900" fill="#fff" opacity=".62"/><circle cx="261.5" cy="440.5" r="1.900" fill="#fff" opacity=".62"/><circle cx="266.6" cy="445.6" r="1.900" fill="#fff" opacity=".62"/><circle cx="170.0" cy="387.2" r="1.900" fill="#fff" opacity=".62"/><circle cx="175.9" cy="390.9" r="1.900" fill="#fff" opacity=".62"/><circle cx="181.7" cy="394.7" r="1.900" fill="#fff" opacity=".62"/><circle cx="187.5" cy="398.6" r="1.900" fill="#fff" opacity=".62"/><circle cx="193.2" cy="402.7" r="1.900" fill="#fff" opacity=".62"/><circle cx="198.9" cy="406.9" r="1.900" fill="#fff" opacity=".62"/><circle cx="204.5" cy="411.2" r="1.900" fill="#fff" opacity=".62"/><circle cx="210.0" cy="415.7" r="1.900" fill="#fff" opacity=".62"/><circle cx="215.5" cy="420.3" r="1.900" fill="#fff" opacity=".62"/><circle cx="221.0" cy="425.1" r="1.900" fill="#fff" opacity=".62"/><circle cx="226.4" cy="430.0" r="1.900" fill="#fff" opacity=".62"/><circle cx="231.7" cy="435.0" r="1.900" fill="#fff" opacity=".62"/><circle cx="237.0" cy="440.2" r="1.900" fill="#fff" opacity=".62"/><circle cx="242.3" cy="445.5" r="1.900" fill="#fff" opacity=".62"/><circle cx="247.5" cy="450.9" r="1.900" fill="#fff" opacity=".62"/><circle cx="252.6" cy="456.5" r="1.900" fill="#fff" opacity=".62"/><circle cx="155.3" cy="392.9" r="1.900" fill="#fff" opacity=".62"/><circle cx="161.2" cy="396.9" r="1.900" fill="#fff" opacity=".62"/><circle cx="167.1" cy="401.0" r="1.900" fill="#fff" opacity=".62"/><circle cx="173.0" cy="405.2" r="1.900" fill="#fff" opacity=".62"/><circle cx="178.8" cy="409.6" r="1.900" fill="#fff" opacity=".62"/><circle cx="184.5" cy="414.2" r="1.900" fill="#fff" opacity=".62"/><circle cx="190.2" cy="418.9" r="1.900" fill="#fff" opacity=".62"/><circle cx="195.9" cy="423.7" r="1.900" fill="#fff" opacity=".62"/><circle cx="201.4" cy="428.7" r="1.900" fill="#fff" opacity=".62"/><circle cx="206.9" cy="433.9" r="1.900" fill="#fff" opacity=".62"/><circle cx="212.4" cy="439.2" r="1.900" fill="#fff" opacity=".62"/><circle cx="217.8" cy="444.7" r="1.900" fill="#fff" opacity=".62"/><circle cx="223.1" cy="450.4" r="1.900" fill="#fff" opacity=".62"/><circle cx="228.4" cy="456.1" r="1.900" fill="#fff" opacity=".62"/><circle cx="233.6" cy="462.1" r="1.900" fill="#fff" opacity=".62"/><circle cx="238.8" cy="468.2" r="1.900" fill="#fff" opacity=".62"/><circle cx="140.8" cy="399.1" r="1.900" fill="#fff" opacity=".62"/><circle cx="146.9" cy="403.3" r="1.900" fill="#fff" opacity=".62"/><circle cx="152.9" cy="407.7" r="1.900" fill="#fff" opacity=".62"/><circle cx="158.8" cy="412.3" r="1.900" fill="#fff" opacity=".62"/><circle cx="164.7" cy="417.1" r="1.900" fill="#fff" opacity=".62"/><circle cx="170.5" cy="422.0" r="1.900" fill="#fff" opacity=".62"/><circle cx="176.2" cy="427.1" r="1.900" fill="#fff" opacity=".62"/><circle cx="181.9" cy="432.3" r="1.900" fill="#fff" opacity=".62"/><circle cx="187.5" cy="437.8" r="1.900" fill="#fff" opacity=".62"/><circle cx="193.1" cy="443.4" r="1.900" fill="#fff" opacity=".62"/><circle cx="198.6" cy="449.2" r="1.900" fill="#fff" opacity=".62"/><circle cx="204.0" cy="455.1" r="1.900" fill="#fff" opacity=".62"/><circle cx="209.4" cy="461.2" r="1.900" fill="#fff" opacity=".62"/><circle cx="214.7" cy="467.5" r="1.900" fill="#fff" opacity=".62"/><circle cx="219.9" cy="474.0" r="1.900" fill="#fff" opacity=".62"/><circle cx="225.1" cy="480.6" r="1.900" fill="#fff" opacity=".62"/><circle cx="126.7" cy="405.7" r="1.900" fill="#fff" opacity=".62"/><circle cx="132.8" cy="410.3" r="1.900" fill="#fff" opacity=".62"/><circle cx="138.9" cy="415.0" r="1.900" fill="#fff" opacity=".62"/><circle cx="144.9" cy="419.9" r="1.900" fill="#fff" opacity=".62"/><circle cx="150.8" cy="425.1" r="1.900" fill="#fff" opacity=".62"/><circle cx="156.7" cy="430.4" r="1.900" fill="#fff" opacity=".62"/><circle cx="162.5" cy="435.9" r="1.900" fill="#fff" opacity=".62"/><circle cx="168.2" cy="441.6" r="1.900" fill="#fff" opacity=".62"/><circle cx="173.9" cy="447.4" r="1.900" fill="#fff" opacity=".62"/><circle cx="179.4" cy="453.5" r="1.900" fill="#fff" opacity=".62"/><circle cx="185.0" cy="459.7" r="1.900" fill="#fff" opacity=".62"/><circle cx="190.4" cy="466.2" r="1.900" fill="#fff" opacity=".62"/><circle cx="195.8" cy="472.8" r="1.900" fill="#fff" opacity=".62"/><circle cx="201.1" cy="479.6" r="1.900" fill="#fff" opacity=".62"/><circle cx="206.4" cy="486.6" r="1.900" fill="#fff" opacity=".62"/><circle cx="211.6" cy="493.7" r="1.900" fill="#fff" opacity=".62"/><circle cx="112.9" cy="412.7" r="1.900" fill="#fff" opacity=".62"/><circle cx="119.1" cy="417.7" r="1.900" fill="#fff" opacity=".62"/><circle cx="125.2" cy="422.8" r="1.900" fill="#fff" opacity=".62"/><circle cx="131.2" cy="428.1" r="1.900" fill="#fff" opacity=".62"/><circle cx="137.2" cy="433.6" r="1.900" fill="#fff" opacity=".62"/><circle cx="143.1" cy="439.3" r="1.900" fill="#fff" opacity=".62"/><circle cx="148.9" cy="445.3" r="1.900" fill="#fff" opacity=".62"/><circle cx="154.7" cy="451.4" r="1.900" fill="#fff" opacity=".62"/><circle cx="160.4" cy="457.7" r="1.900" fill="#fff" opacity=".62"/><circle cx="166.0" cy="464.2" r="1.900" fill="#fff" opacity=".62"/><circle cx="171.6" cy="471.0" r="1.900" fill="#fff" opacity=".62"/><circle cx="177.0" cy="477.9" r="1.900" fill="#fff" opacity=".62"/><circle cx="182.4" cy="485.0" r="1.900" fill="#fff" opacity=".62"/><circle cx="187.8" cy="492.4" r="1.900" fill="#fff" opacity=".62"/><circle cx="193.0" cy="499.9" r="1.900" fill="#fff" opacity=".62"/><circle cx="198.2" cy="507.6" r="1.900" fill="#fff" opacity=".62"/><circle cx="99.3" cy="420.3" r="1.900" fill="#fff" opacity=".62"/><circle cx="105.6" cy="425.5" r="1.900" fill="#fff" opacity=".62"/><circle cx="111.7" cy="431.1" r="1.900" fill="#fff" opacity=".62"/><circle cx="117.8" cy="436.8" r="1.900" fill="#fff" opacity=".62"/><circle cx="123.8" cy="442.7" r="1.900" fill="#fff" opacity=".62"/><circle cx="129.8" cy="448.9" r="1.900" fill="#fff" opacity=".62"/><circle cx="135.6" cy="455.2" r="1.900" fill="#fff" opacity=".62"/><circle cx="141.4" cy="461.8" r="1.900" fill="#fff" opacity=".62"/><circle cx="147.1" cy="468.6" r="1.900" fill="#fff" opacity=".62"/><circle cx="152.8" cy="475.6" r="1.900" fill="#fff" opacity=".62"/><circle cx="158.3" cy="482.9" r="1.900" fill="#fff" opacity=".62"/><circle cx="163.8" cy="490.3" r="1.900" fill="#fff" opacity=".62"/><circle cx="169.2" cy="498.0" r="1.900" fill="#fff" opacity=".62"/><circle cx="174.6" cy="505.8" r="1.900" fill="#fff" opacity=".62"/><circle cx="179.8" cy="513.9" r="1.900" fill="#fff" opacity=".62"/><circle cx="185.0" cy="522.2" r="1.900" fill="#fff" opacity=".62"/><text x="103.6" y="483.4" font-size="10" fill="#fff" opacity=".85" text-anchor="end">1</text><text x="101.1" y="467.9" font-size="10" fill="#fff" opacity=".85" text-anchor="end">2</text><text x="98.7" y="452.3" font-size="10" fill="#fff" opacity=".85" text-anchor="end">3</text><text x="96.3" y="436.7" font-size="10" fill="#fff" opacity=".85" text-anchor="end">4</text><text x="93.9" y="421.1" font-size="10" fill="#fff" opacity=".85" text-anchor="end">5</text><text x="91.4" y="405.6" font-size="10" fill="#fff" opacity=".85" text-anchor="end">6</text><text x="89.0" y="390.0" font-size="10" fill="#fff" opacity=".85" text-anchor="end">7</text><text x="107.0" y="503.0" font-size="10" fill="#fff" opacity=".85" text-anchor="end">20</text><text x="119.3" y="512.4" font-size="10" fill="#fff" opacity=".85" text-anchor="end">15</text><text x="131.7" y="521.8" font-size="10" fill="#fff" opacity=".85" text-anchor="end">10</text><text x="144.0" y="531.2" font-size="10" fill="#fff" opacity=".85" text-anchor="end">5</text><text x="156.3" y="540.7" font-size="10" fill="#fff" opacity=".85" text-anchor="end">0</text><text x="168.7" y="550.1" font-size="10" fill="#fff" opacity=".85" text-anchor="end">-5</text><text x="266.0" y="503.0" font-size="10" fill="#fff" opacity=".85">35</text><text x="253.2" y="512.4" font-size="10" fill="#fff" opacity=".85">40</text><text x="240.3" y="521.8" font-size="10" fill="#fff" opacity=".85">45</text><text x="227.5" y="531.2" font-size="10" fill="#fff" opacity=".85">50</text><text x="214.7" y="540.7" font-size="10" fill="#fff" opacity=".85">55</text><text x="201.8" y="550.1" font-size="10" fill="#fff" opacity=".85">60</text><text x="48" y="454.7" font-size="16" fill="#fff" opacity=".7" font-family="Liberation Serif, serif">COP</text><text x="67" y="535" font-size="16" fill="#fff" opacity=".7" font-family="Liberation Serif, serif">AT (°C)</text><text x="252.5" y="535" font-size="16" fill="#fff" opacity=".7" font-family="Liberation Serif, serif">VL (°C)</text><circle cx="185" cy="411" r="7.400" fill="#6a5cdc" opacity=".92"/><text x="177" y="394.5" font-size="12" fill="#6f66d6" font-family="Liberation Serif, serif">5.1</text><path d="M72.5 96.6L425.70000000000005 187" stroke="#5b4dd6" stroke-width="1.700"/><circle cx="72.69999999999999" cy="96.69999999999999" r="2.200" fill="#c9c9dc" fill-opacity=".5" stroke="#7374c4" stroke-width="1.100"/><circle cx="425.70000000000005" cy="187" r="2.200" fill="#c9c9dc" fill-opacity=".5" stroke="#7374c4" stroke-width="1.100"/><defs><pattern id="pc" patternUnits="userSpaceOnUse" x="5" y="0" width="16" height="16"><rect width="16" height="16" fill="#fff" fill-opacity=".13"/><rect width="8" height="8" fill="#1a0a90" fill-opacity=".3"/><rect x="8" y="8" width="8" height="8" fill="#1a0a90" fill-opacity=".3"/></pattern></defs><path d="M389 176.0C386.5 166.9 381.5 162.9 377.9 157.20000000000002A14.500 14.500 0 1 1 400.1 157.20000000000002C396.5 162.9 391.5 166.9 389 176.0z" fill="#6e5cdc" opacity=".95"/><path d="M389 176.0C386.5 166.9 381.5 162.9 377.9 157.20000000000002A14.500 14.500 0 1 1 400.1 157.20000000000002C396.5 162.9 391.5 166.9 389 176.0z" fill="url(#pc)"/><text x="388.20000000000005" y="154.5" font-size="16" fill="#e6e6ea" opacity=".85" text-anchor="middle" font-family="Liberation Serif, serif">26°C (0)</text></svg><div class="abs wl" style="left:0;top:0;width:60px;height:13px;background:rgba(233,199,100,.75);color:#6b6b6b">w020271 ⚓</div><div class="abs wl" style="left:34px;top:13px;width:52px;height:10px;background:rgba(60,60,60,.25);color:rgba(255,255,255,.3)">w019926 ⚓</div><div class="abs wl wd" style="left:17px;top:317.500px;width:60px;height:12px">w019925 ⚓</div><div class="abs wl wd" style="left:499px;top:24px;width:30px;height:12px">w019927 ⚓</div><div class="abs wl wd" style="left:503.500px;top:310px;width:30px;height:12px">w019928 ⚓</div><div class="abs" id="tip">Seite zeigen</div></div><div id="ctrack" class="abs"></div><div id="cthumb" class="abs"></div>
<div class="abs blk" style="top:4px;height:34px"></div>
<svg class="abs" style="left:825px;top:8px;width:24px;height:24px;fill:#fff" viewBox="0 0 24 24"><path d="M19 5v14H5V5zm1.100-2H3.900c-.500 0-.900.400-.900.900v16.200c0 .400.400.900.900.900h16.200c.400 0 .900-.500.900-.900V3.900c0-.500-.500-.900-.900-.900M11 7h6v2h-6zm0 4h6v2h-6zm0 4h6v2h-6zM7 7h2v2H7zm0 4h2v2H7zm0 4h2v2H7z"/></svg>
<div class="abs" style="left:853px;top:9px;font-size:16px;line-height:24px">Attribute</div>
<div class="abs" style="left:833px;top:54px;font-size:14px;line-height:20px;letter-spacing:.4px;color:#fff">SEITE</div>
<div class="abs" style="left:907.4px;top:54px;font-size:14px;line-height:20px;letter-spacing:.4px;color:#69adf7">WIDGET</div>
<div class="abs" style="left:998px;top:54px;font-size:14px;line-height:20px;letter-spacing:.4px;color:#fff">CSS</div>
<div class="abs" style="left:1060px;top:54px;font-size:14px;line-height:20px;letter-spacing:.4px;color:#fff">SKRIPTE</div>
<div class="abs" style="left:891px;top:83px;width:91px;height:2px;background:#69adf7"></div>
<svg class="abs" style="left:818px;top:86px;width:38px;height:38px" viewBox="0 0 38 38"><rect width="38" height="38" rx="3" fill="#4a719d"/><circle cx="9" cy="9.500" r="4" fill="#bdbdbd"/><path d="M1.500 36v-5l9-9 5 5 8-11.500 12.500 14.500v6z" fill="#bdbdbd" stroke="#bdbdbd" stroke-width="1" stroke-linejoin="round"/></svg>
<div class="abs" style="left:861px;top:87px;font-size:15.4px;line-height:20px">w020271</div>
<div class="abs" style="left:932px;top:88px;font-size:11.500px;line-height:16px;font-weight:bold;font-style:italic">Basic</div>
<div class="abs" style="left:932.500px;top:108px;font-size:12px;line-height:16px;font-style:italic">Image</div>
<div class="abs blk" style="top:135px;height:28px"></div>
<svg class="abs" style="left:818.7px;top:139.2px;width:20px;height:20px;fill:#fff" viewBox="0 0 24 24"><path d="M4.250 5.610C6.270 8.200 10 13 10 13v6c0 .550.450 1 1 1h2c.550 0 1-.450 1-1v-6s3.720-4.800 5.740-7.390c.510-.660.040-1.610-.790-1.610H5.040c-.830 0-1.300.950-.790 1.610"/></svg>
<div class="abs sec" style="left:839px;top:141.6px;">Generell</div>
<div class="abs blk" style="top:173px;height:28px"></div>
<div class="abs sec" style="left:819px;top:179.7px;">Sichtbarkeit</div>
<div class="abs blk" style="top:211px;height:253px"></div>
<div class="abs secb" style="left:819px;top:232.2px;">Allgemein</div>
<div class="abs lab" style="left:820px;top:276.3px;letter-spacing:-0.215px;">Quelle</div>
<svg class="abs" style="left:962px;top:273px;width:16px;height:16px;fill:#fff" viewBox="0 0 24 24"><path d="M3.900 12c0-1.710 1.390-3.100 3.100-3.100h4V7H7c-2.760 0-5 2.240-5 5s2.240 5 5 5h4v-1.900H7c-1.710 0-3.100-1.390-3.100-3.100M8 13h8v-2H8zm9-6h-4v1.900h4c1.710 0 3.100 1.390 3.100 3.100s-1.390 3.100-3.100 3.100h-4V17h4c2.760 0 5-2.240 5-5s-2.240-5-5-5"/></svg>
<div class="abs val" style="left:1012px;top:279.7px;">_PRJ_NAME/star-sky.png</div>
<div class="abs ul" style="top:303px"></div>
<div class="abs lab" style="left:820px;top:311.5px;letter-spacing:-0.425px;">Strecken</div>
<svg class="abs" style="left:1014px;top:310px;width:12px;height:12px" viewBox="0 0 12 12"><rect width="12" height="12" rx="1.500" fill="#70abf4"/><path d="M2.300 6.300l2.400 2.400 5-5.200" fill="none" stroke="#2a2a2a" stroke-width="1.100"/></svg>
<div class="abs lab" style="left:820px;top:337.2px;letter-spacing:-0.189px;">Updatezeit(ms)</div>
<div class="abs" style="left:913px;top:339px;width:16px;height:16px;background:#333"></div><svg class="abs" style="left:909px;top:335px;width:24px;height:24px;fill:#fff" viewBox="0 0 24 24"><path d="M12 2C6.480 2 2 6.480 2 12s4.480 10 10 10 10-4.480 10-10S17.520 2 12 2m1 15h-2v-6h2zm0-8h-2V7h2z"/></svg>
<svg class="abs" style="left:992px;top:334.2px;width:16px;height:16px;fill:#fff" viewBox="0 0 24 24"><path d="M3.900 12c0-1.710 1.390-3.100 3.100-3.100h4V7H7c-2.760 0-5 2.240-5 5s2.240 5 5 5h4v-1.900H7c-1.710 0-3.100-1.390-3.100-3.100M8 13h8v-2H8zm9-6h-4v1.900h4c1.710 0 3.100 1.390 3.100 3.100s-1.390 3.100-3.100 3.100h-4V17h4c2.760 0 5-2.240 5-5s-2.240-5-5-5"/></svg>
<div class="abs" style="left:1017px;top:346px;width:345px;height:2px;background:#4b6589"></div><div class="abs" style="left:1011px;top:341px;width:12px;height:12px;border-radius:50%;background:#70abf4"></div>
<div class="abs lab" style="left:820px;top:368.6px;letter-spacing:-0.1px;">Update bei Aufwachen</div>
<div class="abs cb" style="top:367px"></div>
<div class="abs lab" style="left:820px;top:393.9px;letter-spacing:-0.201px;">Update bei Viewwechsel</div>
<div class="abs cb" style="top:392px"></div>
<div class="abs lab" style="left:820px;top:419.0px;letter-spacing:-0.273px;">Addiere nichst zu URL</div>
<div class="abs cb" style="top:417px"></div>
<div class="abs lab" style="left:820px;top:443.6px;letter-spacing:-0.166px;">allowUserInteractions</div>
<div class="abs cb" style="top:442px"></div>
<div class="abs blk" style="top:474px;height:435.4px"></div>
<div class="abs secb" style="left:819px;top:495.7px;">CSS Allgemein</div>
<div class="abs lab" style="left:820px;top:541.1px;letter-spacing:0.048px;">position</div>
<svg class="abs" style="left:992px;top:537px;width:16px;height:16px;fill:#fff" viewBox="0 0 24 24"><path d="M3.900 12c0-1.710 1.390-3.100 3.100-3.100h4V7H7c-2.760 0-5 2.240-5 5s2.240 5 5 5h4v-1.900H7c-1.710 0-3.100-1.390-3.100-3.100M8 13h8v-2H8zm9-6h-4v1.900h4c1.710 0 3.100 1.390 3.100 3.100s-1.390 3.100-3.100 3.100h-4V17h4c2.760 0 5-2.240 5-5s-2.240-5-5-5"/></svg>
<div class="abs ul" style="top:559px"></div>
<div class="abs lab" style="left:820px;top:568.4px;letter-spacing:-0.125px;">display</div>
<svg class="abs" style="left:992px;top:565px;width:16px;height:16px;fill:#fff" viewBox="0 0 24 24"><path d="M3.900 12c0-1.710 1.390-3.100 3.100-3.100h4V7H7c-2.760 0-5 2.240-5 5s2.240 5 5 5h4v-1.900H7c-1.710 0-3.100-1.390-3.100-3.100M8 13h8v-2H8zm9-6h-4v1.900h4c1.710 0 3.100 1.390 3.100 3.100s-1.390 3.100-3.100 3.100h-4V17h4c2.760 0 5-2.240 5-5s-2.240-5-5-5"/></svg>
<div class="abs ul" style="top:587.3px"></div>
<div class="abs lab" style="left:820px;top:600.4px;letter-spacing:-0.183px;">links</div>
<svg class="abs" style="left:992px;top:597.5px;width:16px;height:16px;fill:#fff" viewBox="0 0 24 24"><path d="M3.900 12c0-1.710 1.390-3.100 3.100-3.100h4V7H7c-2.760 0-5 2.240-5 5s2.240 5 5 5h4v-1.900H7c-1.710 0-3.100-1.390-3.100-3.100M8 13h8v-2H8zm9-6h-4v1.900h4c1.710 0 3.100 1.390 3.100 3.100s-1.390 3.100-3.100 3.100h-4V17h4c2.760 0 5-2.240 5-5s-2.240-5-5-5"/></svg>
<div class="abs ul" style="top:622.2px"></div>
<div class="abs val" style="left:1012px;top:598.3px;">0</div>
<div class="abs lab" style="left:820px;top:633.7px;letter-spacing:-0.006px;">oben</div>
<svg class="abs" style="left:992px;top:631px;width:16px;height:16px;fill:#fff" viewBox="0 0 24 24"><path d="M3.900 12c0-1.710 1.390-3.100 3.100-3.100h4V7H7c-2.760 0-5 2.240-5 5s2.240 5 5 5h4v-1.900H7c-1.710 0-3.100-1.390-3.100-3.100M8 13h8v-2H8zm9-6h-4v1.900h4c1.710 0 3.100 1.390 3.100 3.100s-1.390 3.100-3.100 3.100h-4V17h4c2.760 0 5-2.240 5-5s-2.240-5-5-5"/></svg>
<div class="abs ul" style="top:656.3px"></div>
<div class="abs val" style="left:1012px;top:632.9px;">0</div>
<div class="abs lab" style="left:820px;top:669.7px;letter-spacing:0.148px;">width</div>
<svg class="abs" style="left:992px;top:666.4px;width:16px;height:16px;fill:#fff" viewBox="0 0 24 24"><path d="M3.900 12c0-1.710 1.390-3.100 3.100-3.100h4V7H7c-2.760 0-5 2.240-5 5s2.240 5 5 5h4v-1.900H7c-1.710 0-3.100-1.390-3.100-3.100M8 13h8v-2H8zm9-6h-4v1.900h4c1.710 0 3.100 1.390 3.100 3.100s-1.390 3.100-3.100 3.100h-4V17h4c2.760 0 5-2.240 5-5s-2.240-5-5-5"/></svg>
<div class="abs ul" style="top:691.3px"></div>
<div class="abs val" style="left:1012px;top:668.6px;">100%</div>
<div class="abs lab" style="left:820px;top:704.7px;letter-spacing:-0.145px;">Höhe</div>
<svg class="abs" style="left:992px;top:701.3px;width:16px;height:16px;fill:#fff" viewBox="0 0 24 24"><path d="M3.900 12c0-1.710 1.390-3.100 3.100-3.100h4V7H7c-2.760 0-5 2.240-5 5s2.240 5 5 5h4v-1.900H7c-1.710 0-3.100-1.390-3.100-3.100M8 13h8v-2H8zm9-6h-4v1.900h4c1.710 0 3.100 1.390 3.100 3.100s-1.390 3.100-3.100 3.100h-4V17h4c2.760 0 5-2.240 5-5s-2.240-5-5-5"/></svg>
<div class="abs ul" style="top:726.5px"></div>
<div class="abs val" style="left:1012px;top:703.1px;">100%</div>
<div class="abs lab" style="left:820px;top:737.5px;letter-spacing:-0.045px;">z-index</div>
<svg class="abs" style="left:992px;top:734px;width:16px;height:16px;fill:#fff" viewBox="0 0 24 24"><path d="M3.900 12c0-1.710 1.390-3.100 3.100-3.100h4V7H7c-2.760 0-5 2.240-5 5s2.240 5 5 5h4v-1.900H7c-1.710 0-3.100-1.390-3.100-3.100M8 13h8v-2H8zm9-6h-4v1.900h4c1.710 0 3.100 1.390 3.100 3.100s-1.390 3.100-3.100 3.100h-4V17h4c2.760 0 5-2.240 5-5s-2.240-5-5-5"/></svg>
<div class="abs ul" style="top:757.5px"></div>
<div class="abs val" style="left:1012px;top:736.4px;">20</div>
<div class="abs lab" style="left:820px;top:767.7px;letter-spacing:0.055px;">overflow-x</div>
<svg class="abs" style="left:992px;top:763.9px;width:16px;height:16px;fill:#fff" viewBox="0 0 24 24"><path d="M3.900 12c0-1.710 1.390-3.100 3.100-3.100h4V7H7c-2.760 0-5 2.240-5 5s2.240 5 5 5h4v-1.900H7c-1.710 0-3.100-1.390-3.100-3.100M8 13h8v-2H8zm9-6h-4v1.900h4c1.710 0 3.100 1.390 3.100 3.100s-1.390 3.100-3.100 3.100h-4V17h4c2.760 0 5-2.240 5-5s-2.240-5-5-5"/></svg>
<div class="abs ul" style="top:785.3px"></div>
<div class="abs lab" style="left:820px;top:796.0px;letter-spacing:0.055px;">overflow-y</div>
<svg class="abs" style="left:992px;top:791.7px;width:16px;height:16px;fill:#fff" viewBox="0 0 24 24"><path d="M3.900 12c0-1.710 1.390-3.100 3.100-3.100h4V7H7c-2.760 0-5 2.240-5 5s2.240 5 5 5h4v-1.900H7c-1.710 0-3.100-1.390-3.100-3.100M8 13h8v-2H8zm9-6h-4v1.900h4c1.710 0 3.100 1.390 3.100 3.100s-1.390 3.100-3.100 3.100h-4V17h4c2.760 0 5-2.240 5-5s-2.240-5-5-5"/></svg>
<div class="abs ul" style="top:813.3px"></div>
<div class="abs lab" style="left:820px;top:824.5px;letter-spacing:0.0px;">opacity</div>
<svg class="abs" style="left:992px;top:820.9px;width:16px;height:16px;fill:#fff" viewBox="0 0 24 24"><path d="M3.900 12c0-1.710 1.390-3.100 3.100-3.100h4V7H7c-2.760 0-5 2.240-5 5s2.240 5 5 5h4v-1.900H7c-1.710 0-3.100-1.390-3.100-3.100M8 13h8v-2H8zm9-6h-4v1.900h4c1.710 0 3.100 1.390 3.100 3.100s-1.390 3.100-3.100 3.100h-4V17h4c2.760 0 5-2.240 5-5s-2.240-5-5-5"/></svg>
<div class="abs ul" style="top:845px"></div>
<div class="abs lab" style="left:820px;top:856.0px;letter-spacing:-0.304px;">cursor</div>
<svg class="abs" style="left:992px;top:851.3px;width:16px;height:16px;fill:#fff" viewBox="0 0 24 24"><path d="M3.900 12c0-1.710 1.390-3.100 3.100-3.100h4V7H7c-2.760 0-5 2.240-5 5s2.240 5 5 5h4v-1.900H7c-1.710 0-3.100-1.390-3.100-3.100M8 13h8v-2H8zm9-6h-4v1.900h4c1.710 0 3.100 1.390 3.100 3.100s-1.390 3.100-3.100 3.100h-4V17h4c2.760 0 5-2.240 5-5s-2.240-5-5-5"/></svg>
<div class="abs ul" style="top:875px"></div>
<div class="abs lab" style="left:820px;top:886.7px;letter-spacing:-0.083px;">Druckeffekt</div>
<svg class="abs" style="left:992px;top:882.8px;width:16px;height:16px;fill:#fff" viewBox="0 0 24 24"><path d="M3.900 12c0-1.710 1.390-3.100 3.100-3.100h4V7H7c-2.760 0-5 2.240-5 5s2.240 5 5 5h4v-1.900H7c-1.710 0-3.100-1.390-3.100-3.100M8 13h8v-2H8zm9-6h-4v1.900h4c1.710 0 3.100 1.390 3.100 3.100s-1.390 3.100-3.100 3.100h-4V17h4c2.760 0 5-2.240 5-5s-2.240-5-5-5"/></svg>
<div class="abs ul" style="top:906px"></div>
<div class="abs blk" style="top:920px;height:40px"></div>
<div class="abs sec" style="left:819px;top:926.7px;">CSS Font &amp; Text</div>
</div></body></html>
